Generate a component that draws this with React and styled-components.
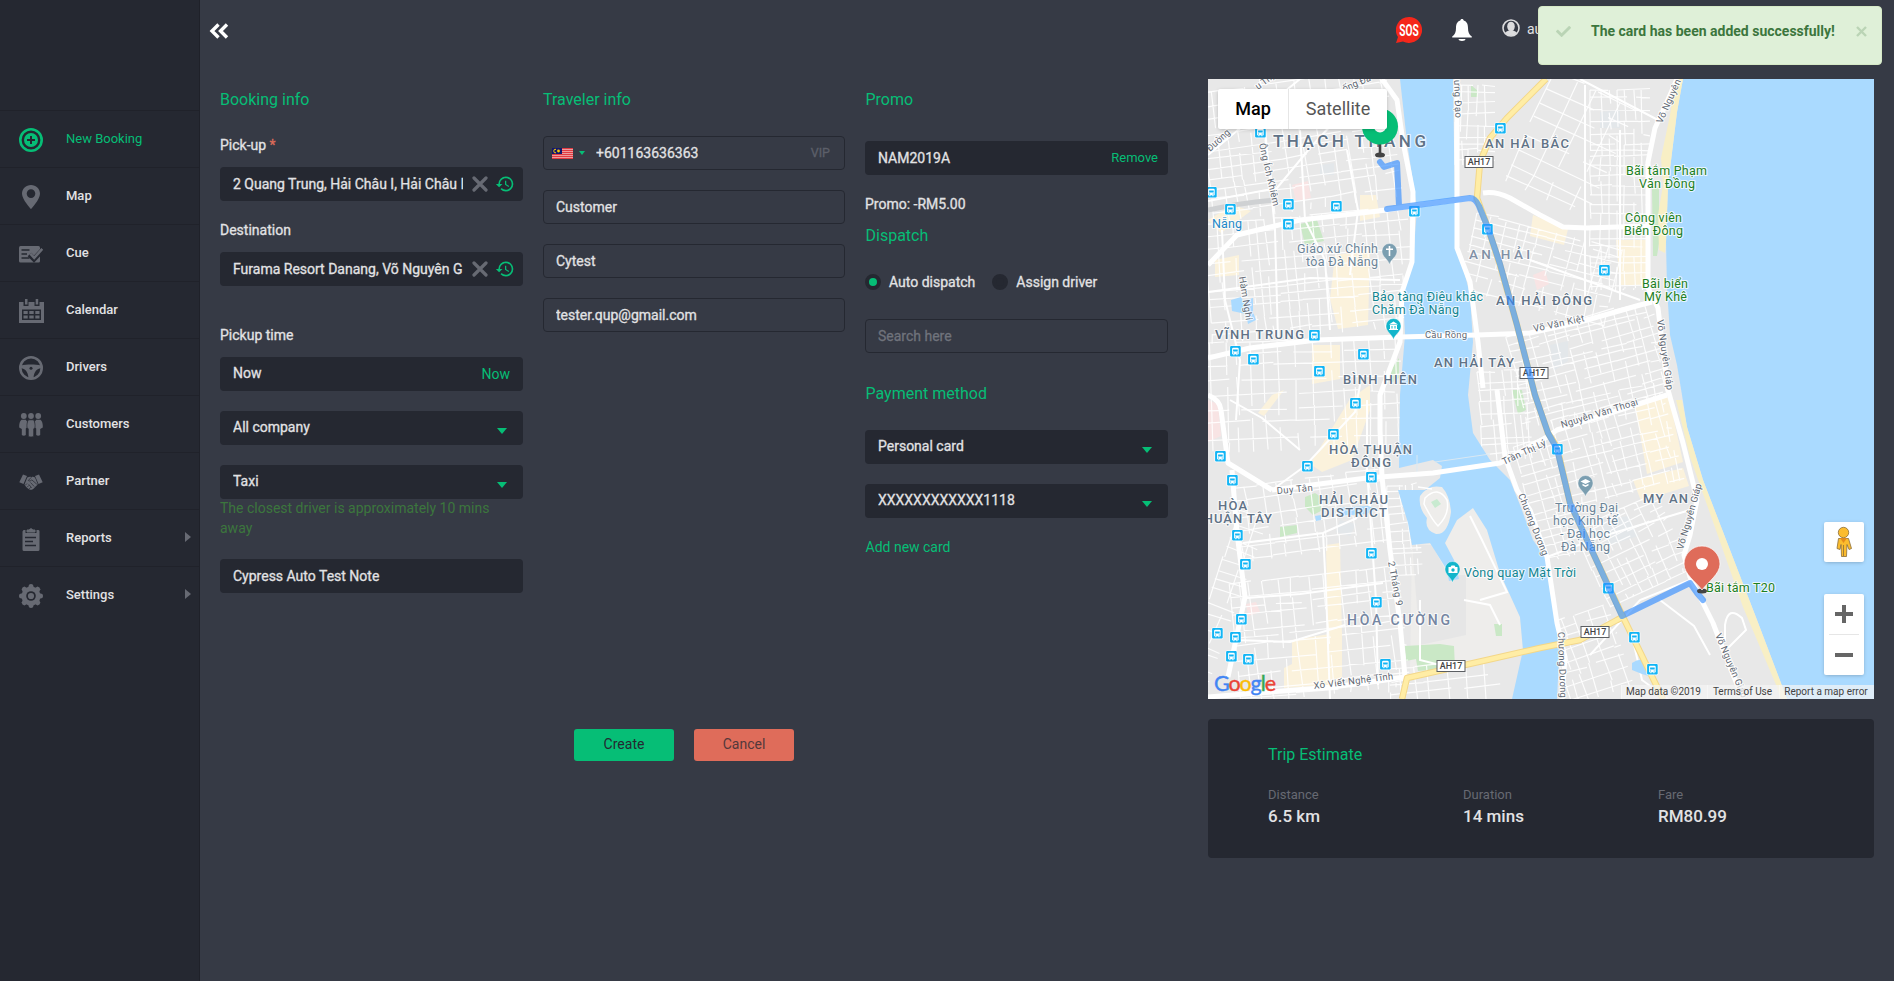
import React from "react";
import styled, { createGlobalStyle } from "styled-components";
import { MdHistory } from "react-icons/md";
import { FaCheck } from "react-icons/fa";

const c = {
  bg: "#363a45",
  dark: "#252831",
  line: "#1f2129",
  green: "#06be76",
  red: "#df6c5a",
  text: "#e2e2e4",
  icon: "#676a73",
};

const Global = createGlobalStyle`
  * { box-sizing: border-box; }
  body { margin: 0; background: ${c.bg}; color: ${c.text}; font: 14px/20px Roboto, "Noto Sans", sans-serif; }
  button, input { font: inherit; }
`;

const Page = styled.div`
  display: flex;
  width: 100%;
  height: 981px;
  overflow: hidden;
  position: relative;
`;

/* ---------- sidebar ---------- */
const Sidebar = styled.nav`
  flex: 0 0 200px;
  padding-top: 110px;
  background: ${c.dark};
  border-right: 1px solid ${c.line};
`;
const NavItem = styled.a`
  display: flex;
  align-items: center;
  height: 57px;
  padding: 1px 8px 0 19px;
  border-top: 1px solid #20222a;
  font-size: 13px;
  font-weight: ${(p) => (p.$active ? 400 : 500)};
  color: ${(p) => (p.$active ? c.green : c.text)};
`;
const NavIcon = styled.span`
  display: flex;
  width: 25px;
  height: 24px;
  margin-right: 22px;
  color: ${(p) => (p.$active ? c.green : c.icon)};
`;
const NavLabel = styled.span`
  flex: 1;
  line-height: 18px;
  padding-bottom: 1px;
`;
const SubArrow = styled.i`
  border: 5px solid transparent;
  border-left: 6px solid ${c.icon};
  border-right: 0;
  margin-bottom: 4px;
`;

/* ---------- main ---------- */
const Main = styled.main`
  flex: 1;
  display: flex;
  flex-direction: column;
`;
const TopBar = styled.header`
  display: flex;
  justify-content: space-between;
  align-items: flex-start;
  height: 79px;
  padding: 17px 20px 0 8px;
`;
const Toggle = styled.button`
  display: flex;
  width: 24px;
  height: 28px;
  padding: 0;
  border: 0;
  background: none;
`;
const TopRight = styled.div`
  display: flex;
  width: 478px;
`;
const TopIcon = styled.span`
  display: flex;
  width: ${(p) => p.$w}px;
`;
const UserName = styled.span`
  font-size: 14px;
  padding: 2px 0 0 1px;
`;
const Content = styled.div`
  display: flex;
  padding-left: 20px;
`;
const FormArea = styled.section`
  width: 948px;
  margin-right: 40px;
`;
const Columns = styled.div`
  display: grid;
  grid-template-columns: 303px 302px 303px;
  gap: 20px;
  height: 650px;
`;
const Column = styled.div`
  display: flex;
  flex-direction: column;
  padding-top: 9px;
`;
const Heading = styled.h2`
  margin: 0;
  margin-top: ${(p) => p.$top || 0}px;
  padding-left: ${(p) => p.$inset || 0}px;
  height: 24px;
  font-size: 16px;
  line-height: 24px;
  font-weight: 400;
  color: ${c.green};
`;
const Label = styled.label`
  margin-top: ${(p) => p.$top}px;
  margin-bottom: ${(p) => p.$bottom ?? 12}px;
  height: 20px;
  -webkit-text-stroke: 0.3px;
`;
const Required = styled.span`
  color: ${c.red};
`;
const Field = styled.div`
  display: flex;
  align-items: center;
  height: 34px;
  margin-top: ${(p) => p.$top || 0}px;
  padding: 0 ${(p) => p.$right || 13}px 0 ${(p) => (p.$outline ? 12 : 13)}px;
  border-radius: 4px;
  background: ${(p) => (p.$outline ? "transparent" : c.dark)};
  border: ${(p) => (p.$outline ? `1px solid ${c.dark}` : "0")};
  color: ${(p) => (p.$muted ? "#70737c" : c.text)};
`;
const PhonePrefix = styled.span`
  display: flex;
  align-items: center;
  margin-left: -4px;
`;
const Value = styled.span`
  flex: 1;
  overflow: hidden;
  white-space: nowrap;
  padding-bottom: ${(p) => p.$lift || 0}px;
  -webkit-text-stroke: 0.3px;
`;
const Caret = styled.i`
  margin: 5px 3px 0 0;
  border: 5px solid transparent;
  border-top: 6px solid ${c.green};
  border-bottom: 0;
`;
const SmallCaret = styled.i`
  margin: 0 11px 0 6px;
  border: 3px solid transparent;
  border-top: 4px solid ${c.green};
  border-bottom: 0;
`;
const FieldAction = styled.a`
  color: ${c.green};
  font-size: ${(p) => p.$size || 14}px;
`;
const FieldIcons = styled.span`
  display: flex;
  align-items: center;
  gap: 7px;
  margin-left: 9px;
  color: ${c.green};
`;
const Vip = styled.span`
  font-size: 12.5px;
  color: #5c5f69;
  margin-right: 1px;
  -webkit-text-stroke: 0.3px;
`;
const Hint = styled.p`
  margin: -1px 0 0;
  height: 61px;
  color: #3c763d;
`;
const Radios = styled.div`
  display: flex;
  align-items: center;
  height: 20px;
  margin-top: 24px;
  gap: 17px;
`;
const Radio = styled.label`
  display: flex;
  align-items: center;
  gap: 8px;
  -webkit-text-stroke: 0.3px;
`;
const Dot = styled.i`
  width: 16px;
  height: 16px;
  border-radius: 50%;
  border: 4px solid ${c.dark};
  background: ${(p) => (p.$on ? c.green : c.dark)};
`;
const AddCard = styled.a`
  margin-top: 19px;
  padding-left: 0.5px;
  color: ${c.green};
`;
const Actions = styled.div`
  display: flex;
  justify-content: center;
  gap: 20px;
  width: 928px;
`;
const Button = styled.button`
  width: 100px;
  height: 32px;
  padding: 0 0 2px;
  border: 0;
  border-radius: 3px;
  background: ${(p) => (p.$danger ? c.red : c.green)};
  color: ${(p) => (p.$danger ? "#54383b" : c.dark)};
`;

/* ---------- right side ---------- */
const Side = styled.section`
  width: 666px;
`;
const MapBox = styled.div`
  position: relative;
  height: 620px;
  overflow: hidden;
  background: #e8e8e8;
`;
const MapSvg = styled.svg`
  display: block;
`;
const MapTypes = styled.div`
  position: absolute;
  left: 10px;
  top: 10px;
  display: flex;
  height: 40px;
  background: #fff;
  border-radius: 2px;
  box-shadow: 0 1px 4px -1px rgba(0, 0, 0, 0.3);
`;
const MapType = styled.span`
  width: ${(p) => (p.$on ? 70 : 99)}px;
  border-left: ${(p) => (p.$on ? 0 : "1px solid #e6e6e6")};
  font-size: 18px;
  line-height: 40px;
  text-align: center;
  font-weight: ${(p) => (p.$on ? 500 : 400)};
  color: ${(p) => (p.$on ? "#000" : "#565656")};
`;
const MapControl = styled.div`
  position: absolute;
  right: 10px;
  bottom: ${(p) => p.$bottom}px;
  width: 40px;
  height: ${(p) => p.$h}px;
  background: #fff;
  border-radius: 2px;
  box-shadow: 0 1px 4px -1px rgba(0, 0, 0, 0.3);
`;
const Credits = styled.div`
  position: absolute;
  right: 0;
  bottom: 0;
  display: flex;
  height: 14px;
  font-size: 10px;
  line-height: 14px;
  color: #444;
  background: rgba(245, 245, 245, 0.7);
`;
const Credit = styled.span`
  width: ${(p) => p.$w}px;
  padding-right: 2px;
  text-align: center;
  white-space: nowrap;
  border-left: 1px solid rgba(255, 255, 255, 0.4);
`;
const Trip = styled.div`
  height: 139px;
  margin-top: 20px;
  padding: 24px 60px;
  border-radius: 4px;
  background: ${c.dark};
`;
const TripGrid = styled.div`
  display: grid;
  grid-template-columns: 195px 195px 1fr;
  margin-top: 18px;
`;
const TripLabel = styled.div`
  font-size: 13px;
  line-height: 20px;
  color: #676a73;
`;
const TripValue = styled.div`
  font-size: 17px;
  line-height: 22px;
  font-weight: 500;
  white-space: nowrap;
`;

const Toast = styled.div`
  position: absolute;
  top: 6px;
  right: 12px;
  display: flex;
  width: 344px;
  height: 59px;
  padding: 14px 14px 0 17px;
  border: 1px solid #d6e9c6;
  border-radius: 4px;
  background: #dff0d8;
  color: #3c763d;
  font-weight: 700;
`;
const ToastText = styled.span`
  flex: 1;
  padding-left: 20px;
`;
const Fade = styled.span`
  display: flex;
  padding-top: 3px;
  opacity: 0.22;
`;

/* ---------- icons ---------- */
const Svg = ({ children, w = 24, h = 24 }) => (
  <svg width={w} height={h} viewBox={`0 0 ${w} ${h}`} fill="currentColor">{children}</svg>
);
const icons = {
  booking: (
    <Svg>
      <circle cx="12" cy="12" r="10.7" fill="none" stroke="currentColor" strokeWidth="2.6" />
      <circle cx="12" cy="12" r="7" />
      <path d="M12 8v8M8 12h8" stroke={c.dark} strokeWidth="2" />
    </Svg>
  ),
  map: (
    <Svg>
      <path fillRule="evenodd" d="M12 0C7 0 3 3.800 3 8.700 3 14.500 12 24 12 24s9-9.500 9-15.300C21 3.800 17 0 12 0zm0 4.300a4.300 4.300 0 1 1 0 8.600 4.300 4.300 0 0 1 0-8.600z" />
    </Svg>
  ),
  cue: (
    <Svg>
      <rect x="0" y="4" width="21" height="16.500" rx="1.500" />
      <path d="M2.500 8h8M2.500 12h5.500M2.500 16h8" stroke={c.dark} strokeWidth="1.400" />
      <path d="M10.500 12.500l4.500 4.700L24 7.500" fill="none" stroke={c.dark} strokeWidth="5" />
      <path d="M11.300 11.700l3.900 4.200 8.100-9" fill="none" stroke="currentColor" strokeWidth="2.600" />
    </Svg>
  ),
  calendar: (
    <Svg w={25} h={24}>
      <path d="M0 3h25v21H0z" />
      <path d="M4.500 0v7h5V0M15.500 0v7h5V0" fill={c.dark} />
      <path d="M6 0h2.500v5.500H6zM16.700 0h2.500v5.500h-2.500z" />
      <path d="M3 10.500h19v10.500H3z" fill={c.dark} />
      <path d="M4.500 12h4.200v3H4.500zM10.300 12h4.400v3h-4.400zM16.300 12h4.200v3h-4.200zM4.500 16.500h4.200v3H4.500zM10.300 16.500h4.400v3h-4.400zM16.300 16.500h4.200v3h-4.200z" />
    </Svg>
  ),
  drivers: (
    <Svg>
      <circle cx="12" cy="12" r="10.700" fill="none" stroke="currentColor" strokeWidth="2.600" />
      <path d="M2 9.500c6-1.200 14-1.200 20 0v2.800c-4 .2-7 3.500-7.500 9.700h-5C9 15.800 6 12.500 2 12.300z" />
      <circle cx="12" cy="12.200" r="1.500" fill={c.dark} />
    </Svg>
  ),
  customers: (
    <Svg>
      <circle cx="4.800" cy="3" r="2.900" /><circle cx="12" cy="3" r="2.900" /><circle cx="19.200" cy="3" r="2.900" />
      <path d="M2.500 6.800h4.300L8 8.500v6l-1.200 1v6.500c-1 1-3 1-4 0v-6L.2 14.500C0 11 .8 8 2.500 6.800zM21.500 6.800h-4.300L16 8.500v6l1.200 1v6.500c1 1 3 1 4 0v-6l2.600-1.500c.2-3.500-.6-6.500-2.300-7.700z" />
      <path d="M9.500 6.800h5c1.300 1.500 1.800 4.500 1.500 8l-1.300 1V23c-1 1.300-4.400 1.300-5.400 0v-7.200L8 14.800c-.3-3.500.2-6.500 1.500-8z" stroke={c.dark} strokeWidth=".7" />
    </Svg>
  ),
  partner: (
    <Svg>
      <path d="M4 4.500l4 1.500-3.500 8L.3 12.300zM20 4.500L16 6l3.500 8 4.200-1.700z" />
      <path d="M8.300 7.500c2-.8 3-1 4-.3 1.300-.6 2.500-.3 3.700.2l2.700 6.600c-.8 1.800-2.200 2.500-3 3.500-1.200 1.500-2.500 2.300-4 2.300-1.700 0-5.200-3-6.200-5.300z" />
      <path d="M12.300 7.300l-3 3.200c1.200 1 2.500.3 3.500-.6l5 4.300M11.500 12.500l3.700 4M9.700 14.300l3 3.500M6 15.500l2-2M8 17.300l2-2M10.200 19l1.600-1.800" fill="none" stroke={c.dark} strokeWidth=".7" />
    </Svg>
  ),
  reports: (
    <Svg>
      <path d="M4.500 3h15A1.500 1.500 0 0 1 20.500 4.500v18A1.500 1.500 0 0 1 19 24H5a1.500 1.500 0 0 1-1.500-1.500v-18z" />
      <path d="M6.500 2h11v4h-11z" fill={c.dark} />
      <path d="M8 5V3h2.300a1.800 1.800 0 0 1 3.400 0H16v2z" stroke="currentColor" />
      <path d="M6 10.500h11M6 14.500h8M6 18.500h11" stroke={c.dark} strokeWidth="1.300" />
    </Svg>
  ),
  settings: (
    <Svg>
      {[0, 45, 90, 135, 180, 225, 270, 315].map((a) => (
        <path key={a} d="M9 4l1-3.300q2-1.400 4 0L15 4z" transform={`rotate(${a} 12 12)`} />
      ))}
      <circle cx="12" cy="12" r="6.500" fill="none" stroke="currentColor" strokeWidth="6" />
      <circle cx="12" cy="12" r="4.800" fill={c.dark} />
      <circle cx="12" cy="12" r="3.100" />
    </Svg>
  ),
};
const nav = [
  ["booking", "New Booking"], ["map", "Map"], ["cue", "Cue"], ["calendar", "Calendar"],
  ["drivers", "Drivers"], ["customers", "Customers"], ["partner", "Partner"],
  ["reports", "Reports", true], ["settings", "Settings", true],
];
const Cross = () => (
  <svg width="16" height="16" viewBox="0 0 16 16" stroke={c.icon} strokeWidth="3.200" strokeLinecap="round">
    <path d="M2 2l12 12M14 2L2 14" />
  </svg>
);
const Flag = () => (
  <svg width="21" height="11" viewBox="0 0 21 11">
    <rect width="21" height="11" fill="#f0a6a8" />
    {[0, 2, 4, 6, 8, 10].map((y) => <rect key={y} y={y} width="21" height="1.100" fill="#e23b42" />)}
    <rect width="10" height="6" fill="#13186b" />
    <path d="M4 1.300A1.800 1.800 0 1 0 4 4.800" fill="none" stroke="#fc0" />
    <circle cx="6.500" cy="3" r="1.400" fill="#fc0" />
  </svg>
);

/* ---------- map ---------- */
// Side streets: two sets of broken parallel lines per district, from a seeded generator.
const streets = (cx, cy, w, h, angle, step, seed) => {
  let s = seed;
  const rnd = () => ((s = (s * 16807) % 2147483647) / 2147483647);
  const a = (angle * Math.PI) / 180, co = Math.cos(a), si = Math.sin(a);
  const pt = (x, y) => `${(cx + x * co - y * si).toFixed(1)} ${(cy + x * si + y * co).toFixed(1)}`;
  let d = "";
  for (let y = -h / 2; y < h / 2; y += step * (0.6 + rnd() * 0.9))
    for (let x = -w / 2; x < w / 2; ) {
      const l = step * (2 + rnd() * 6);
      d += `M${pt(x, y)}L${pt(Math.min(w / 2, x + l), y + (rnd() - 0.5) * 4)}`;
      x += l + (rnd() > 0.4 ? step : 0);
    }
  for (let x = -w / 2; x < w / 2; x += step * (0.7 + rnd()))
    for (let y = -h / 2; y < h / 2; ) {
      const l = step * (1.5 + rnd() * 4);
      d += `M${pt(x, y)}L${pt(x + (rnd() - 0.5) * 4, Math.min(h / 2, y + l))}`;
      y += l + (rnd() > 0.4 ? step : 0);
    }
  return d;
};
const districts = [
  [1300, 145, 190, 130, -8, 11, 11], [1310, 275, 205, 120, -5, 11, 22],
  [1302, 395, 200, 110, -2, 12, 33], [1312, 515, 150, 75, -8, 12, 44],
  [1320, 635, 170, 120, -6, 11, 55], [1405, 530, 30, 90, -4, 8, 66],
  [1223, 600, 30, 180, 20, 13, 77], [1475, 125, 40, 80, 0, 9, 88],
  [1570, 145, 90, 120, 25, 16, 99], [1620, 190, 60, 200, 0, 9, 111],
  [1540, 270, 150, 80, 14, 11, 122], [1590, 365, 150, 95, -14, 9, 133],
  [1505, 415, 50, 90, -4, 9, 144], [1618, 450, 115, 90, -14, 9, 155],
  [1633, 550, 90, 85, -25, 9, 166], [1590, 655, 65, 85, -18, 10, 177],
  [1445, 684, 110, 40, -5, 13, 188], [1548, 500, 40, 120, -15, 9, 199],
];
const minor = [
  "M1208 201L1277 188 1310 148 1345 110", "M1260 79L1275 230 1278 340", "M1222 230L1225 300 1240 360 1236 420",
  "M1300 130L1305 220 1325 260 1330 330", "M1347 150L1358 210 1350 275", "M1243 543L1323 533 1357 518",
  "M1323 533L1326 590 1330 699", "M1247 598L1300 594 1383 583", "M1272 490L1305 466 1355 412 1360 385",
  "M1235 640L1290 642 1345 625", "M1580 79L1658 120", "M1585 85V302", "M1620 130V300", "M1530 260L1640 300",
  "M1547 557L1600 537 1690 510", "M1690 580L1640 600 1590 655", "M1367 400L1367 470 1376 600 1378 685",
  "M1208 155L1250 120 1300 79", "M1230 400L1262 418 1300 450", "M1208 292L1310 278 1400 280",
  "M1470 516L1482 540 1507 592 1480 600M1464 600L1490 605 1500 625M1420 600L1420 660 1440 665",
  "M1630 627L1642 680 1668 699M1660 600L1694 626 1710 655", "M1725 640V625Q1728 605 1742 618L1746 630 1728 648",
];
const majors = [
  "M1208 265L1237 235 1300 220 1387 210 1417 205 1473 198",
  "M1483 193Q1496 191 1510 198L1540 215 1563 227 1587 228 1648 226",
  "M1382 79L1397 100 1403 142 1413 192 1412 262 1402 292 1400 342 1380 395V430L1382 477 1390 550 1400 623 1405 677",
  "M1208 358L1250 348 1317 340 1400 337 1477 335 1530 333 1580 322 1640 305 1652 302",
  "M1457 79V248L1470 282 1478 342 1483 388M1497 390L1505 457 1517 490 1530 510 1547 557 1557 623 1565 657 1562 699",
  "M1272 490L1367 478 1433 473 1500 463 1547 437 1557 430 1667 395",
  "M1208 395Q1220 400 1221 410L1228 463 1272 490M1232 470L1237 533 1245 597 1228 677",
  "M1208 697L1333 687 1405 677",
  "M1677 79L1667 102 1655 128 1648 162V288L1658 308 1662 342 1668 390 1683 443 1693 483 1697 500 1690 535 1684 555 1690 577 1713 623 1730 667 1743 699",
];
const yellow = [
  "M1402 699L1407 678 1487 660 1540 648 1580 640 1617 620 1623 617 1663 699",
  "M1546 79L1507 118 1490 138 1480 162 1477 198 1488 228 1500 265 1517 325 1535 395 1548 433 1557 447 1570 503 1593 553 1623 617",
];
const commercial = [
  "M1335 255l35-5-2 75-30 4-8-30z", "M1360 195h16l4 22-20 4z", "M1312 345h28v34l-28 5z", "M1370 385l-20 14-40 65 12 8 30-12 18-50z",
  "M1292 640l50-8v52l-58 4v-20l8-4z", "M1326 545l14-2 2 95-14 2z", "M1616 240h30v45h-26z", "M1533 215l35 14-4 16-34-9z",
  "M1635 405l34-8 14 65-36 12z", "M1633 480l50-12 6 18-48 15z", "M1208 220l25-15 18 6-30 22zM1215 260l24-5v20l-24 2z", "M1272 395l-14 18 6 3 20-26z",
];
const parks = ["M1300 224l17-4 7 21-19 4z", "M1305 497l10-4 6 4v14l-8 4-8-8z", "M1280 527l17-2v8l-17 4z", "M1405 646l35-2 14 2 1 22-37 3-2-12-10 2z",
  "M1652 189l7-2v56l-2 13h-4z", "M1512 390h10l4 20-8 4z", "M1471 85l7 6v6h-7z", "M1391 370l8-12v20l-8 5z", "M1494 624h8v12h-6z"];
const buses = [[1260,132],[1288,204],[1336,206],[1288,224],[1211,192],[1230,209],[1414,211],[1487,229],[1500,128],[1314,335],[1235,351],[1253,359],[1319,371],[1363,354],[1604,270],[1355,403],[1333,434],[1307,466],[1220,456],[1232,480],[1371,477],[1237,535],[1245,564],[1371,553],[1376,602],[1241,619],[1217,633],[1235,637],[1231,656],[1248,659],[1385,664],[1557,449],[1608,588],[1634,637],[1652,669]];
const slate = "#607286", grey = "#6c8598", teal = "#148590", leaf = "#1d7f22", road = "#5f6873";
// text, x, baseline, width, size, colour, weight, rotation
const labels = [
  ["THẠCH THANG", 1273, 147, 153, 17, slate, 500], ["AN HẢI BẮC", 1485, 148, 84, 13, slate, 500],
  ["AN HẢI", 1469, 259, 61, 13.5, "#8190a5", 500], ["AN HẢI ĐÔNG", 1496, 305, 96, 13, slate, 500],
  ["VĨNH TRUNG", 1215, 339, 89, 13, slate, 500], ["AN HẢI TÂY", 1434, 367, 80, 13, slate, 500],
  ["BÌNH HIÊN", 1343, 384, 74, 13, slate, 500], ["HÒA THUẬN", 1329, 454, 83, 13, slate, 500],
  ["ĐÔNG", 1351, 467, 40, 13, slate, 500], ["HẢI CHÂU", 1319, 504, 69, 13, slate, 500],
  ["DISTRICT", 1321, 517, 66, 13, slate, 500], ["HÒA", 1218, 510, 29, 13, slate, 500],
  ["THUẬN TÂY", 1195, 523, 77, 13, slate, 500], ["HÒA CƯỜNG", 1347, 625, 103, 14, "#7586a2", 500],
  ["MY AN", 1643, 503, 45, 13, slate, 500],
  ["Giáo xứ Chính", 1297, 253, 81, 12.5, grey], ["tòa Đà Nẵng", 1306, 266, 72, 12.5, grey],
  ["Bảo tàng Điêu khắc", 1372, 301, 111, 12.5, teal], ["Chăm Đà Nẵng", 1372, 314, 87, 12.5, teal],
  ["Bãi tắm Phạm", 1626, 175, 81, 12.5, leaf], ["Văn Đồng", 1639, 188, 56, 12.5, leaf],
  ["Công viên", 1625, 222, 57, 12.5, leaf], ["Biển Đông", 1624, 235, 59, 12.5, leaf],
  ["Bãi biển", 1642, 288, 46, 12.5, leaf], ["Mỹ Khê", 1644, 301, 43, 12.5, leaf],
  ["Nẵng", 1212, 228, 30, 12.5, "#1e88c8"],
  ["Trường Đại", 1555, 512, 63, 12.5, grey], ["học Kinh tế", 1553, 525, 65, 12.5, grey],
  ["- Đại học", 1560, 538, 50, 12.5, grey], ["Đà Nẵng", 1561, 551, 49, 12.5, grey],
  ["Vòng quay Mặt Trời", 1464, 577, 112, 12.5, teal], ["Bãi tắm T20", 1706, 592, 69, 12.5, leaf],
  ["Cầu Rồng", 1425, 338, 42, 9.5, road],
  ["Ông Ích Khiêm", 1259, 144, 64, 9.5, road, 400, 77], ["Hàm Nghi", 1239, 277, 44, 9.5, road, 400, 81],
  ["ưng Đạo", 1454, 80, 38, 9.5, road, 400, 88], ["Đường", 1210, 152, 28, 9.5, road, 400, -42],
  ["ống Đa", 1344, 92, 30, 9.5, road, 400, -23], ["Võ Nguyên", 1662, 124, 47, 9.5, road, 400, -66],
  ["u Thị", 1258, 90, 20, 9.5, road, 400, -36],
  ["Võ Văn Kiệt", 1534, 332, 52, 9.5, road, 400, -12], ["Võ Nguyên Giáp", 1657, 320, 71, 9.5, road, 400, 82],
  ["Duy Tân", 1277, 494, 36, 9.5, road, 400, -5], ["2 Tháng 9", 1388, 562, 45, 9.5, road, 400, 79],
  ["Xô Viết Nghệ Tĩnh", 1314, 689, 80, 9.5, road, 400, -7], ["Trần Thị Lý", 1504, 465, 47, 9.5, road, 400, -25],
  ["Nguyễn Văn Thoại", 1562, 428, 80, 9.5, road, 400, -17], ["Chương Dương", 1518, 495, 66, 9.5, road, 400, 68],
  ["Chương Dương", 1558, 632, 66, 9.5, road, 400, 88], ["Võ Nguyên Giáp", 1683, 550, 68, 9.5, road, 400, -74],
  ["Võ Nguyên Giáp", 1715, 635, 69, 9.5, road, 400, 67],
];
const shields = [[1479, 162], [1534, 373], [1451, 666], [1595, 632]];

const PoiPin = ({ x, y, color, children }) => (
  <g transform={`translate(${x} ${y})`}>
    <path d="M0 13.500C-1.500 8-7.500 6-7.500 0a7.500 7.500 0 0 1 15 0c0 6-6 8-7.500 13.500z" fill={color} stroke="#fff" strokeOpacity=".6" strokeWidth=".6" />
    <g fill="#fff">{children}</g>
  </g>
);
const GoogleMark = () => (
  <text x="1214" y="691" fontFamily="Lato, sans-serif" fontSize="21.500" textLength="62" strokeWidth=".4">
    {[["G", "#4285f4"], ["o", "#ea4335"], ["o", "#fbbc05"], ["g", "#4285f4"], ["l", "#34a853"], ["e", "#ea4335"]].map(([t, f], i) => (
      <tspan key={i} fill={f} stroke={f}>{t}</tspan>
    ))}
  </text>
);
const CityMap = () => (
  <MapSvg width="666" height="620" viewBox="1208 79 666 620" fill="none">
    <rect x="1208" y="79" width="666" height="620" fill="#e8e8e8" />
    <g fill="#fbf2dc">{commercial.map((d) => <path key={d} d={d} />)}</g>
    <path fill="#eeedeb" d="M1445 543L1457 520 1473 508 1487 530 1500 573 1520 617 1523 650 1410 675 1412 545z" />
    <path fill="#e6e6e6" d="M1412 545h20l16 30h18v60l-46 10z" />
    <path fill="#f8e4e4" d="M1292 185l16-4 3 17-15 3zM1208 400l10 4 3 32-13 6zM1533 275l12-5 4 14-12 6zM1246 604l10-2 4 10-12 4z" />
    <path fill="#e3e7ea" d="M1600 112l20-2v18h-20zM1550 345l18-4v20l-14 10zM1600 520l28-4 10 20-30 10zM1320 165l14-2v12h-14zM1340 520l16 4-6 12-14-4z" />
    <g fill="#cae8c6">{parks.map((d) => <path key={d} d={d} />)}</g>
    <g stroke="#fff" strokeWidth="1.200" strokeOpacity=".88">{districts.map((a) => <path key={a[6]} d={streets(...a)} />)}</g>
    <g stroke="#fff" strokeWidth="2">{minor.map((d) => <path key={d} d={d} />)}</g>
    <path d="M1208 210Q1240 203 1275 200" stroke="#cfd1d3" strokeWidth="5" />
    <g fill="#aadaff">
      <path d="M1400 79L1407 142 1417 208 1413 262 1403 295 1405 335 1400 395 1399 468 1433 460 1442 466 1440 478 1425 490 1398 490 1408 523 1412 545 1430 543 1447 570 1449 581 1459 579 1454 560 1445 543 1457 520 1473 508 1487 530 1500 573 1520 617 1523 650 1512 699H1557L1560 637 1555 603 1545 557 1533 540 1520 505 1510 480 1490 460 1473 433 1468 395 1473 342 1470 295 1460 255 1455 208 1453 79z" />
      <path d="M1683 79L1677 112 1668 185 1666 242 1667 288 1670 335 1677 365 1682 395 1687 427 1703 480 1730 550 1757 620 1787 699H1874V79z" />
      <path d="M1231 300l10-3 2 4 10-3v14l3 8-8 4-2-10-14-3z" />
      <path d="M1632 663q12-8 18 4l2 10-10-3-10-4zM1336 508l32-2 10 3-12 5-28 2zM1315 516l6-1v5l-5 1z" />
    </g>
    <path d="M1420 496Q1428 484 1442 487 1450 496 1451 512 1448 535 1436 534 1424 530 1427 518 1418 508 1420 496z" fill="#eeedeb" />
    <path d="M1425 498Q1438 485 1447 500 1450 514 1438 526 1432 520 1424 504zM1418 487L1432 489" stroke="#fff" strokeWidth="1.500" />
    <path d="M1431 502l6-3 4 5-6 4z" fill="#c8ead0" />
    <path d="M1435 462L1490 454M1417 455v18" stroke="#d9e8f3" />
    <path fill="#f8efc5" d="M1683 79H1676L1670 115 1661 158 1663 185 1658 215 1659 250 1665 253 1666 242 1668 185 1677 112zM1682 400H1676L1690 457 1717 533 1743 607 1777 687 1781 699H1787L1757 620 1730 550 1703 480 1687 427z" />
    <g stroke="#fff" strokeWidth="5" strokeLinejoin="round">{majors.map((d) => <path key={d} d={d} />)}</g>
    <g stroke="#f3d789" strokeWidth="6.500" strokeLinejoin="round">{yellow.map((d) => <path key={d} d={d} />)}</g>
    <g stroke="#ffeda5" strokeWidth="4.500" strokeLinejoin="round">{yellow.map((d) => <path key={d} d={d} />)}</g>
    {buses.map(([x, y]) => (
      <g key={`${x}-${y}`} transform={`translate(${x + 0.4} ${y + 0.3})`}>
        <rect x="-5.900" y="-5.900" width="11.800" height="11.800" rx="1.500" fill="#fff" />
        <rect x="-5.300" y="-5.300" width="10.600" height="10.600" rx="1" fill="#12b5f5" />
        <path d="M-3.300 3V-2.500Q-3.300-3.500-2-3.500H2Q3.300-3.500 3.300-2.500V3H2V4H1V3H-1V4H-2V3z" fill="#fff" />
        <path d="M-2.300-1.800H2.300V.2H-2.300zM-2.300 1.200h1v1h-1zM1.300 1.200h1v1h-1z" fill="#12b5f5" />
      </g>
    ))}
    {shields.map(([x, y]) => (
      <g key={x}>
        <rect x={x - 14} y={y - 5.5} width="28" height="11" fill="#fff" stroke="#5c5f63" />
        <text x={x} y={y + 3.3} fontSize="9" fill="#444" textAnchor="middle" fontWeight="500">AH17</text>
      </g>
    ))}
    <PoiPin x={1389.5} y={251} color="#7b9eb0"><path d="M-.8-5H.8V-2.500H3.500V-1H.8V5H-.8V-1H-3.500V-2.500H-.8z" /></PoiPin>
    <PoiPin x={1393.5} y={326} color="#12b5cb"><path d="M-4.500-1.500L0-4.500 4.500-1.500zM-3.500-1h7v4h1v1h-9V3h1z" /><path d="M-2 0h1v2.500h-1zM1 0h1v2.500H1z" fill="#12b5cb" /></PoiPin>
    <PoiPin x={1452.5} y={569} color="#12b5cb"><path d="M-4-2h2l1-1.500h3L3-2h2v6h-9z" /><circle cx=".5" cy="1" r="1.700" fill="#12b5cb" /></PoiPin>
    <PoiPin x={1585.5} y={483} color="#7b9eb0"><path d="M-5-1.500L0-4 5-1.500 0 1zM-3 .8L0 2.200 3 .8V2.500L0 4-3 2.500z" /></PoiPin>
    <g fontFamily='Roboto, "Noto Sans", sans-serif' stroke="#fff" strokeWidth="2.200" strokeOpacity=".75" strokeLinejoin="round" paintOrder="stroke">
      {labels.map(([t, x, y, w, size, fill, weight = 400, rot = 0]) => (
        <text key={`${t}${x}`} x={x} y={y} textLength={w} fontSize={size} fill={fill} fontWeight={weight} transform={`rotate(${rot} ${x} ${y})`}>{t}</text>
      ))}
    </g>
    <path d="M1380 162L1384 167 1397 163 1399 206M1387 209L1470 198Q1475 198 1479 206L1488 228 1500 264 1517 325 1535 395 1548 433 1557 449 1570 503 1593 553 1622 616 1690 583 1697 593 1703 600" stroke="#318cff" strokeOpacity=".64" strokeWidth="6" strokeLinecap="round" strokeLinejoin="round" />
    <ellipse cx="1380" cy="155" rx="5" ry="2.500" fill="#444" /><path d="M1380 144v10" stroke="#444" strokeWidth="2.600" />
    <circle cx="1380" cy="126.500" r="18" fill={c.green} /><circle cx="1380" cy="126.500" r="6" fill="#fff" />
    <ellipse cx="1702" cy="591" rx="5" ry="2.500" fill="#444" />
    <path d="M1702 590C1696 582 1684 574 1684 564a18 18 0 0 1 36 0c0 10-12 18-18 26z" fill={c.red} stroke="#fff" strokeWidth=".7" />
    <circle cx="1702" cy="564" r="6" fill="#fff" />
    <GoogleMark />
  </MapSvg>
);

export default function App() {
  return (
    <>
      <Global />
      <Page>
        <Sidebar>
          {nav.map(([icon, label, sub], i) => (
            <NavItem key={label} $active={i === 0}>
              <NavIcon $active={i === 0}>{icons[icon]}</NavIcon>
              <NavLabel>{label}</NavLabel>
              {sub && <SubArrow />}
            </NavItem>
          ))}
        </Sidebar>
        <Main>
          <TopBar>
            <Toggle>
              <svg width="24" height="28" viewBox="0 0 24 28" fill="none" stroke="#fff" strokeWidth="3.400">
                <path d="M10.500 7.500L4 14l6.500 6.500M19 7.500L12.500 14l6.500 6.500" />
              </svg>
            </Toggle>
            <TopRight>
              <TopIcon $w={56}>
                <svg width="26" height="26" viewBox="0 0 26 26">
                  <path d="M13 0a13 13 0 1 1-6 24.500L0 26l2-6A13 13 0 0 1 13 0z" fill="#f5271b" />
                  <text x="3.200" y="18.500" textLength="19.500" lengthAdjust="spacingAndGlyphs" fontFamily="Roboto, sans-serif" fontWeight="700" fontSize="16" fill="#fff">SOS</text>
                </svg>
              </TopIcon>
              <TopIcon $w={50}>
                <svg width="20" height="26" viewBox="0 0 20 26" fill="#fff">
                  <path d="M10 2c1 0 1.600.7 1.700 1.500C15 4.500 16 7.500 16 11c0 4 1 6.500 3.800 8.500v1H.2v-1C3 17.500 4 15 4 11c0-3.500 1-6.500 4.300-7.500C8.400 2.700 9 2 10 2zM6.500 22h7c0 1.300-1.500 2-3.500 2s-3.500-.7-3.500-2z" />
                </svg>
              </TopIcon>
              <TopIcon $w={24}>
                <svg width="18" height="22" viewBox="0 0 18 22" fill="#dcdcde">
                  <circle cx="9" cy="11" r="8" fill="none" stroke="#dcdcde" strokeWidth="1.600" />
                  <ellipse cx="9" cy="9.500" rx="3.800" ry="4.800" />
                  <path d="M3 16q1-2 4-2.500h4q3 .5 4 2.500-3 2.800-6 2.800T3 16z" />
                </svg>
              </TopIcon>
              <UserName>auto</UserName>
            </TopRight>
          </TopBar>
          <Content>
            <FormArea>
              <Columns>
                <Column>
                  <Heading>Booking info</Heading>
                  <Label $top={23}>Pick-up <Required>*</Required></Label>
                  <Field $right={8}><Value>2 Quang Trung, Hải Châu I, Hải Châu I</Value><FieldIcons><Cross /><MdHistory size={20} /></FieldIcons></Field>
                  <Label $top={19}>Destination</Label>
                  <Field $right={8}><Value>Furama Resort Danang, Võ Nguyên G</Value><FieldIcons><Cross /><MdHistory size={20} /></FieldIcons></Field>
                  <Label $top={39}>Pickup time</Label>
                  <Field><Value $lift={2}>Now</Value><FieldAction>Now</FieldAction></Field>
                  <Field $top={20}><Value $lift={2}>All company</Value><Caret /></Field>
                  <Field $top={20}><Value $lift={2}>Taxi</Value><Caret /></Field>
                  <Hint>The closest driver is approximately 10 mins away</Hint>
                  <Field><Value>Cypress Auto Test Note</Value></Field>
                </Column>
                <Column>
                  <Heading>Traveler info</Heading>
                  <Field $outline $top={24}>
                    <PhonePrefix><Flag /><SmallCaret /></PhonePrefix>
                    <Value>+601163636363</Value><Vip>VIP</Vip>
                  </Field>
                  <Field $outline $top={20}><Value>Customer</Value></Field>
                  <Field $outline $top={20}><Value>Cytest</Value></Field>
                  <Field $outline $top={20}><Value>tester.qup@gmail.com</Value></Field>
                </Column>
                <Column>
                  <Heading $inset={0.5}>Promo</Heading>
                  <Field $top={29} $right={10}><Value>NAM2019A</Value><FieldAction $size={13}>Remove</FieldAction></Field>
                  <Label $top={19} $bottom={0}>Promo: -RM5.00</Label>
                  <Heading $top={10} $inset={0.5}>Dispatch</Heading>
                  <Radios>
                    <Radio><Dot $on />Auto dispatch</Radio>
                    <Radio><Dot />Assign driver</Radio>
                  </Radios>
                  <Field $outline $muted $top={27}><Value>Search here</Value></Field>
                  <Heading $top={29} $inset={0.5}>Payment method</Heading>
                  <Field $top={24}><Value $lift={2}>Personal card</Value><Caret /></Field>
                  <Field $top={20}><Value $lift={2}>XXXXXXXXXXXX1118</Value><Caret /></Field>
                  <AddCard>Add new card</AddCard>
                </Column>
              </Columns>
              <Actions><Button>Create</Button><Button $danger>Cancel</Button></Actions>
            </FormArea>
            <Side>
              <MapBox>
                <CityMap />
                <MapTypes><MapType $on>Map</MapType><MapType>Satellite</MapType></MapTypes>
                <MapControl $bottom={137} $h={40}>
                  <svg width="40" height="40" viewBox="0 0 40 40" fill="#fbbc2e" stroke="#8a6d3b" strokeWidth=".8">
                    <path d="M14.500 16.500h10l3 10-2.500 1-2-5-.5 12h-5l-.5-12-1 5-3-1z" />
                    <path d="M19.500 23v11" /><path d="M16 16h7l-3.500 5z" fill="#e58b1b" stroke="none" />
                    <circle cx="19.500" cy="10.500" r="5.200" />
                  </svg>
                </MapControl>
                <MapControl $bottom={24} $h={81}>
                  <svg width="40" height="81" viewBox="0 0 40 81" fill="#666">
                    <path d="M18 11h4v7h7v4h-7v7h-4v-7h-7v-4h7zM11 59h18v4H11z" /><path d="M5 40h30v1H5z" fill="#e6e6e6" />
                  </svg>
                </MapControl>
                <Credits><Credit $w={86}>Map data ©2019</Credit><Credit $w={72}>Terms of Use</Credit><Credit $w={95}>Report a map error</Credit></Credits>
              </MapBox>
              <Trip>
                <Heading>Trip Estimate</Heading>
                <TripGrid>
                  {[["Distance", "6.5 km"], ["Duration", "14 mins"], ["Fare", "RM80.99"]].map(([k, v]) => (
                    <div key={k}><TripLabel>{k}</TripLabel><TripValue>{v}</TripValue></div>
                  ))}
                </TripGrid>
              </Trip>
            </Side>
          </Content>
        </Main>
        <Toast>
          <Fade><FaCheck size={15} /></Fade>
          <ToastText>The card has been added successfully!</ToastText>
          <Fade><svg width="11" height="14" viewBox="0 0 11 14" stroke="#3c763d" strokeWidth="2.400"><path d="M1 3l9 9M10 3l-9 9" /></svg></Fade>
        </Toast>
      </Page>
    </>
  );
}
